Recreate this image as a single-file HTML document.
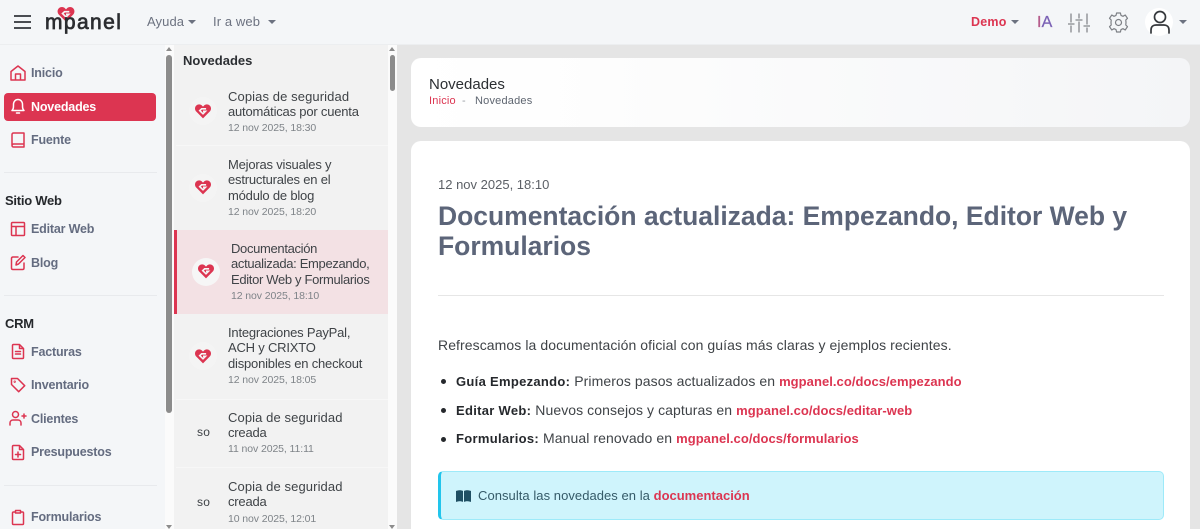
<!DOCTYPE html>
<html lang="es"><head><meta charset="utf-8"><title>Novedades</title>
<style>
*{box-sizing:border-box}
html,body{margin:0;padding:0;width:1200px;height:529px;overflow:hidden;background:#e5e5e5;font-family:"Liberation Sans",sans-serif}
#w{position:relative;width:1200px;height:529px;overflow:hidden;background:#e5e5e5}
.a{position:absolute;white-space:nowrap}
.bx{position:absolute}
.n{font-size:12.5px;font-weight:700;color:#646c80;line-height:16px;left:31px;letter-spacing:-.18px}
.h{font-size:13px;font-weight:700;color:#25282c;line-height:16px;left:5px;letter-spacing:-.25px}
.t{font-size:13px;color:#3f4347;line-height:15.3px;left:228px;letter-spacing:-.2px}
.d{font-size:10.5px;color:#7e8388;line-height:13px;left:228px;letter-spacing:-.1px}
.sep{position:absolute;left:4px;width:153px;height:1px;background:#e8eaed}
.lsep{position:absolute;left:176px;width:212px;height:1px;background:#f7f7f7}
svg.i{position:absolute;fill:none;stroke:#dc3551;stroke-width:1.5;stroke-linecap:round;stroke-linejoin:round}
.b{font-size:14px;color:#3f4347;line-height:18px;letter-spacing:.08px}
.b b{color:#25282c;font-size:13px;letter-spacing:.3px}.b a{color:#dc3551;font-weight:700;text-decoration:none;font-size:13px;letter-spacing:.05px}
.r{color:#dc3551;font-weight:700;text-decoration:none}
.dot{position:absolute;left:441px;width:5px;height:5px;border-radius:50%;background:#25282c}
</style></head><body><div id="w">
<svg width="0" height="0" style="position:absolute"><defs><symbol id="ht" viewBox="0 0 18 16"><path fill="#dc3551" d="M9 15.700 1.500 8.200C-.5 6.200-.5 3 1.500 1.200 3.500-.5 6.500-.3 8 1.500L9 2.500 10 1.500C11.500-.3 14.500-.5 16.500 1.200 18.500 3 18.500 6.200 16.500 8.200Z"/><path fill="none" stroke="#f6f6f6" stroke-width="1.800" d="M12.500 5H7.500L5.300 7 9 10.600 11.800 7.800H9"/></symbol></defs></svg>

<!-- Header -->
<div class="bx" style="left:0;top:0;width:1200px;height:45px;background:#f4f6f8;border-bottom:1px solid #eceef0"></div>
<div class="bx" style="left:14px;top:15px;width:17px;height:2px;background:#4a4d52"></div>
<div class="bx" style="left:14px;top:21px;width:17px;height:2px;background:#4a4d52"></div>
<div class="bx" style="left:14px;top:27px;width:17px;height:2px;background:#4a4d52"></div>
<svg class="bx" style="left:57px;top:7px" width="18" height="15"><use href="#ht"/></svg>
<div class="a" style="left:45px;top:10px;font-size:21px;font-weight:400;color:#2b2d30;-webkit-text-stroke:.7px #2b2d30;line-height:26px;letter-spacing:1.4px">mpanel</div>
<div class="a" style="left:147px;top:14px;font-size:13px;color:#6c7280;line-height:16px;letter-spacing:.1px">Ayuda</div>
<div class="bx" style="left:188px;top:20px;border:4px solid transparent;border-top-color:#6c7280;border-bottom:0"></div>
<div class="a" style="left:213px;top:14px;font-size:13px;color:#6c7280;line-height:16px;letter-spacing:.1px">Ir a web</div>
<div class="bx" style="left:268px;top:20px;border:4px solid transparent;border-top-color:#6c7280;border-bottom:0"></div>
<div class="a r" style="left:971px;top:14px;font-size:12.5px;line-height:16px;letter-spacing:.2px">Demo</div>
<div class="bx" style="left:1011px;top:20px;border:4px solid transparent;border-top-color:#6c7280;border-bottom:0"></div>
<div class="a" style="left:1037px;top:13px;font-size:16px;line-height:19px;letter-spacing:.2px;color:#7b62b5;-webkit-text-stroke:.3px #7b62b5"><span style="color:#b45a8a;-webkit-text-stroke:.3px #b45a8a">I</span>A</div>
<svg class="bx" style="left:1068px;top:13px;fill:none;stroke:#85888c;stroke-width:1.3;stroke-linecap:round" width="22" height="20"><path d="M3 1V9M3 13V19M0 11H6M11 1V5M11 9V19M8 7H14M19 1V11M19 15V19M16 13H22"/></svg>
<svg class="bx" style="left:1108px;top:12px;fill:none;stroke:#7c7f84;stroke-width:1.2;stroke-linejoin:round" width="21" height="21" viewBox="0 0 21 21"><circle cx="10.500" cy="10.500" r="3"/><path d="M8.600 1H12.400L13 3.400 15 4.300 17.200 3 19.500 6.300 17.800 8 18 10.500 17.800 13 19.500 14.700 17.200 18 15 16.700 13 17.600 12.400 20H8.600L8 17.600 6 16.700 3.800 18 1.500 14.700 3.200 13 3 10.500 3.200 8 1.500 6.300 3.800 3 6 4.300 8 3.400Z"/></svg>
<div class="bx" style="left:1145px;top:8px;width:28px;height:28px;border-radius:50%;background:#fff"></div>
<svg class="bx" style="left:1149px;top:10px;fill:none;stroke:#35383c;stroke-width:1.7;stroke-linecap:round" width="22" height="24"><circle cx="11" cy="7" r="5.500"/><path d="M2 23V20C2 16.500 4.500 15 7 15H15C17.500 15 20 16.500 20 20V23"/></svg>
<div class="bx" style="left:1179px;top:20px;border:4px solid transparent;border-top-color:#6c7280;border-bottom:0"></div>

<!-- Sidebar -->
<div class="bx" style="left:0;top:45px;width:165px;height:484px;background:#f4f6f8"></div>
<div class="bx" style="left:165px;top:45px;width:9px;height:484px;background:#fbfbfb"></div>
<div class="bx" style="left:166px;top:55px;width:6px;height:358px;border-radius:3px;background:#8c8c8c"></div>
<div class="bx" style="left:166px;top:47px;border:3px solid transparent;border-bottom:4px solid #8c8c8c;border-top:0"></div>
<div class="bx" style="left:166px;top:525px;border:3px solid transparent;border-top:4px solid #8c8c8c;border-bottom:0"></div>
<div class="bx" style="left:4px;top:93px;width:152px;height:28px;border-radius:4px;background:#dc3551"></div>

<svg class="i" style="left:10px;top:65px" width="16" height="16"><path d="M1 15V6.500L8 1 15 6.500V15ZM5.500 15V9H10.500V15"/></svg>
<div class="a n" style="top:65px">Inicio</div>
<svg class="i" style="left:10px;top:98px;stroke:#fff" width="16" height="17"><path d="M2 12.500C3.500 11 3.500 9.500 3.500 6.500 3.500 3.500 5.500 1.500 8 1.500S12.500 3.500 12.500 6.500C12.500 9.500 12.500 11 14 12.500ZM6.500 15H9.500"/></svg>
<div class="a n" style="top:99px;color:#fff">Novedades</div>
<svg class="i" style="left:11px;top:132px" width="14" height="16"><path d="M1 13V2.500C1 1.600 1.600 1 2.500 1H13V15H2.500C1.600 15 1 14.300 1 13.500 1 12.500 1.600 12 2.500 12H13"/></svg>
<div class="a n" style="top:132px">Fuente</div>
<div class="sep" style="top:172px"></div>
<div class="a h" style="top:193px">Sitio Web</div>
<svg class="i" style="left:10px;top:221px" width="16" height="16"><path d="M2.500 1.500H13.500C14.100 1.500 14.500 1.900 14.500 2.500V13.500C14.500 14.100 14.100 14.500 13.500 14.500H2.500C1.900 14.500 1.500 14.100 1.500 13.500V2.500C1.500 1.900 1.900 1.500 2.500 1.500ZM1.500 5.500H14.500M6 5.500V14.500"/></svg>
<div class="a n" style="top:221px">Editar Web</div>
<svg class="i" style="left:10px;top:254px" width="16" height="17"><path d="M8 3H3C2 3 1.500 3.600 1.500 4.500V14C1.500 15 2 15.500 3 15.500H12.500C13.500 15.500 14 15 14 14V9M6 11 6.500 8 13 1.500 15 3.500 8.500 10Z"/></svg>
<div class="a n" style="top:255px">Blog</div>
<div class="sep" style="top:295px"></div>
<div class="a h" style="top:316px">CRM</div>
<svg class="i" style="left:11px;top:343px" width="14" height="17"><path d="M8.500 1.500H2.500C1.700 1.500 1.500 2 1.500 2.500V14.500C1.500 15 1.900 15.500 2.500 15.500H11.500C12.100 15.500 12.500 15 12.500 14.500V5.500ZM8.500 1.500V5.500H12.500M4.500 8.500H9.500M4.500 11H9.500"/></svg>
<div class="a n" style="top:344px">Facturas</div>
<svg class="i" style="left:10px;top:377px" width="16" height="16"><path d="M1.500 1.500H7.500L14.700 8.700 8.700 14.700 1.500 7.500Z"/><circle cx="4.700" cy="4.700" r=".4"/></svg>
<div class="a n" style="top:377px">Inventario</div>
<svg class="i" style="left:9px;top:410px" width="18" height="16"><circle cx="6.500" cy="4.500" r="3"/><path d="M1 15V13C1 11 2.500 10 4 10H9C10.500 10 12 11 12 13V15M15 4V8M13 6H17"/></svg>
<div class="a n" style="top:411px">Clientes</div>
<svg class="i" style="left:11px;top:444px" width="14" height="17"><path d="M8.500 1.500H2.500C1.700 1.500 1.500 2 1.500 2.500V14.500C1.500 15 1.900 15.500 2.500 15.500H11.500C12.100 15.500 12.500 15 12.500 14.500V5.500ZM8.500 1.500V5.500H12.500M7 8V13M4.500 10.500H9.500"/></svg>
<div class="a n" style="top:444px">Presupuestos</div>
<div class="sep" style="top:485px"></div>
<svg class="i" style="left:11px;top:509px" width="14" height="17"><path d="M4 3H2.500C1.800 3 1.500 3.500 1.500 4V14.500C1.500 15.200 1.900 15.500 2.500 15.500H11.500C12.100 15.500 12.500 15.200 12.500 14.500V4C12.500 3.500 12.200 3 11.500 3H10M4.500 1.500H9.500V4H4.500Z"/></svg>
<div class="a n" style="top:509px">Formularios</div>

<!-- List column -->
<div class="bx" style="left:174px;top:45px;width:214px;height:484px;background:#f2f2f2"></div>
<div class="bx" style="left:388px;top:45px;width:9px;height:484px;background:#fbfbfb"></div>
<div class="bx" style="left:390px;top:55px;width:5px;height:36px;border-radius:3px;background:#8c8c8c"></div>
<div class="bx" style="left:389px;top:47px;border:3px solid transparent;border-bottom:4px solid #8c8c8c;border-top:0"></div>
<div class="bx" style="left:389px;top:525px;border:3px solid transparent;border-top:4px solid #8c8c8c;border-bottom:0"></div>
<div class="a" style="left:183px;top:53px;font-size:13px;font-weight:700;color:#2c2f33;line-height:16px">Novedades</div>

<div class="bx" style="left:189px;top:97px;width:28px;height:28px;border-radius:50%;background:#f4f4f4"></div>
<svg class="bx" style="left:195px;top:104px" width="16" height="15"><use href="#ht"/></svg>
<div class="a t" style="top:89px"><span style="letter-spacing:.1px">Copias de seguridad</span><br>automáticas por cuenta</div>
<div class="a d" style="top:122px">12 nov 2025, 18:30</div>
<div class="lsep" style="top:145px"></div>

<div class="bx" style="left:189px;top:174px;width:28px;height:28px;border-radius:50%;background:#f4f4f4"></div>
<svg class="bx" style="left:195px;top:180px" width="16" height="15"><use href="#ht"/></svg>
<div class="a t" style="top:157px">Mejoras visuales y<br>estructurales en el<br>módulo de blog</div>
<div class="a d" style="top:206px">12 nov 2025, 18:20</div>

<div class="bx" style="left:174px;top:230px;width:214px;height:84px;background:#f3e1e4;border-left:3px solid #dc3551"></div>
<div class="bx" style="left:192px;top:258px;width:28px;height:28px;border-radius:50%;background:#f6f6f6"></div>
<svg class="bx" style="left:198px;top:264px" width="16" height="15"><use href="#ht"/></svg>
<div class="a t" style="left:231px;top:241px;letter-spacing:-.33px">Documentación<br>actualizada: Empezando,<br>Editor Web y Formularios</div>
<div class="a d" style="left:231px;top:290px">12 nov 2025, 18:10</div>

<div class="bx" style="left:189px;top:342px;width:28px;height:28px;border-radius:50%;background:#f4f4f4"></div>
<svg class="bx" style="left:195px;top:349px" width="16" height="15"><use href="#ht"/></svg>
<div class="a t" style="top:325px">Integraciones PayPal,<br>ACH y CRIXTO<br>disponibles en checkout</div>
<div class="a d" style="top:374px">12 nov 2025, 18:05</div>
<div class="lsep" style="top:399px"></div>

<div class="a" style="left:197px;top:425px;font-size:12px;color:#3f4347;line-height:14px;letter-spacing:.3px">so</div>
<div class="a t" style="top:410px"><span style="letter-spacing:.1px">Copia de seguridad</span><br>creada</div>
<div class="a d" style="top:443px">11 nov 2025, 11:11</div>
<div class="lsep" style="top:467px"></div>

<div class="a" style="left:197px;top:495px;font-size:12px;color:#3f4347;line-height:14px;letter-spacing:.3px">so</div>
<div class="a t" style="top:479px"><span style="letter-spacing:.1px">Copia de seguridad</span><br>creada</div>
<div class="a d" style="top:513px">10 nov 2025, 12:01</div>

<!-- Title card -->
<div class="bx" style="left:411px;top:58px;width:779px;height:69px;border-radius:10px;background:linear-gradient(90deg,#fff 0,#fdfdfd 25%,#f4f5f7 100%)"></div>
<div class="a" style="left:429px;top:76px;font-size:15px;color:#2c2f33;line-height:18px">Novedades</div>
<div class="a" style="left:429px;top:95px;font-size:11px;line-height:13px;color:#dc3551;letter-spacing:.2px">Inicio</div>
<div class="a" style="left:462px;top:95px;font-size:11px;line-height:13px;color:#9a9ea4">-</div>
<div class="a" style="left:475px;top:95px;font-size:11px;line-height:13px;color:#5e6570;letter-spacing:.2px">Novedades</div>

<!-- Main card -->
<div class="bx" style="left:411px;top:141px;width:779px;height:388px;border-radius:10px 10px 0 0;background:#fff"></div>
<div class="a" style="left:438px;top:177px;font-size:13px;color:#5c6066;line-height:16px">12 nov 2025, 18:10</div>
<div class="a" style="left:438px;top:201px;font-size:26.5px;font-weight:700;color:#5c6579;line-height:30px;letter-spacing:-.02px">Documentación actualizada: Empezando, Editor Web y<br>Formularios</div>
<div class="bx" style="left:438px;top:295px;width:726px;height:1px;background:#e6e6e6"></div>
<div class="a b" style="left:438px;top:336px">Refrescamos la documentación oficial con guías más claras y ejemplos recientes.</div>
<div class="dot" style="top:379px"></div>
<div class="a b" style="left:456px;top:372px"><b>Guía Empezando:</b> Primeros pasos actualizados en <a>mgpanel.co/docs/empezando</a></div>
<div class="dot" style="top:408px"></div>
<div class="a b" style="left:456px;top:401px"><b>Editar Web:</b> Nuevos consejos y capturas en <a>mgpanel.co/docs/editar-web</a></div>
<div class="dot" style="top:437px"></div>
<div class="a b" style="left:456px;top:429px"><b>Formularios:</b> Manual renovado en <a>mgpanel.co/docs/formularios</a></div>

<div class="bx" style="left:438px;top:471px;width:726px;height:49px;border-radius:5px;background:#cff4fc;border:1px solid #9eeaf9;border-left:3px solid #22c5ec"></div>
<svg class="bx" style="left:456px;top:490px" width="15" height="12"><path fill="#1f4f63" d="M0 1C2.500 0 5.500 0 7 1V12C5.500 11 2.500 11 0 12ZM8 1C9.500 0 12.500 0 15 1V12C12.500 11 9.500 11 8 12Z"/></svg>
<div class="a" style="left:478px;top:488px;font-size:13px;color:#355a68;line-height:16px;letter-spacing:.05px">Consulta las novedades en la <span class="r" style="letter-spacing:0">documentación</span></div>
</div></body></html>
